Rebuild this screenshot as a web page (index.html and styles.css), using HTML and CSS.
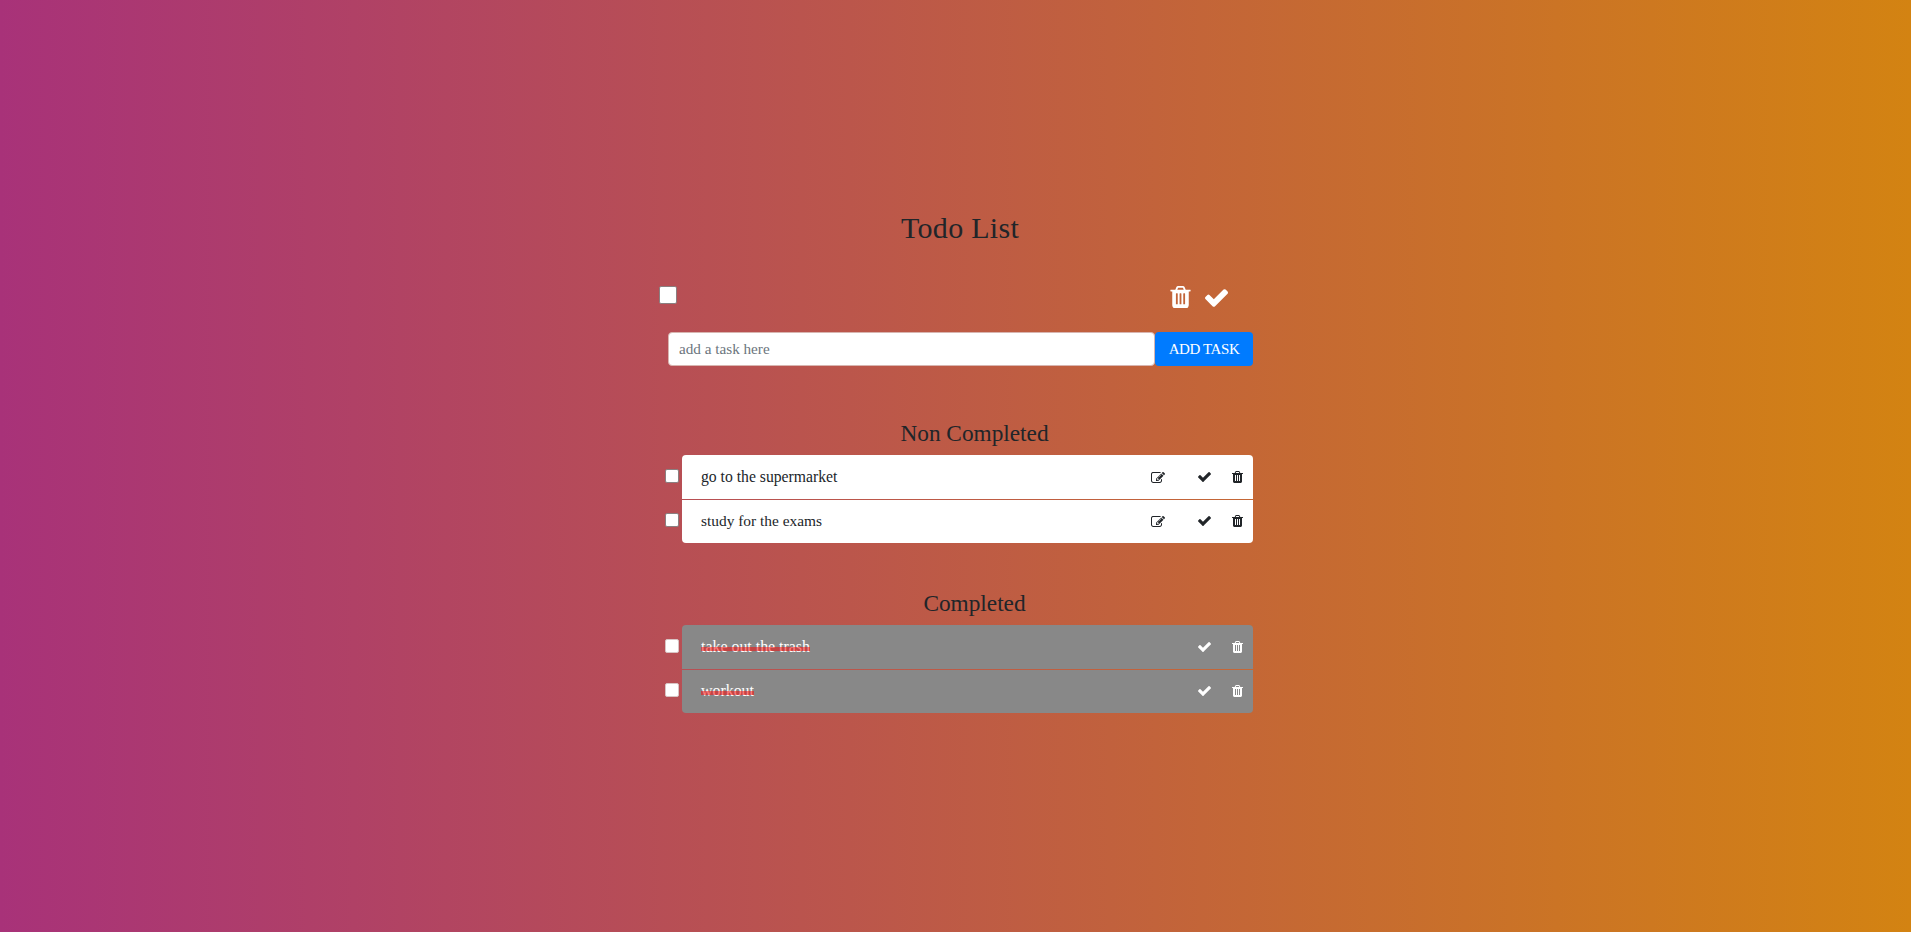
FILE: index.html
```html
<!DOCTYPE html>
<html lang="en">
<head>
<meta charset="utf-8">
<title>Todo List</title>
<link rel="stylesheet" href="styles.css">
</head>
<body>
<svg class="sprite" aria-hidden="true">
  <symbol id="check" viewBox="121 334 1550 1188"><path d="M1671 566q0 40-28 68l-724 724-136 136q-28 28-68 28t-68-28l-136-136-362-362q-28-28-28-68t28-68l136-136q28-28 68-28t68 28l294 295 656-657q28-28 68-28t68 28l136 136q28 28 28 68z"/></symbol>
  <symbol id="trash" viewBox="192 128 1408 1536"><path d="M704 1376v-704q0-14-9-23t-23-9h-64q-14 0-23 9t-9 23v704q0 14 9 23t23 9h64q14 0 23-9t9-23zm256 0v-704q0-14-9-23t-23-9h-64q-14 0-23 9t-9 23v704q0 14 9 23t23 9h64q14 0 23-9t9-23zm256 0v-704q0-14-9-23t-23-9h-64q-14 0-23 9t-9 23v704q0 14 9 23t23 9h64q14 0 23-9t9-23zm-544-992h448l-48-117q-7-9-17-11h-317q-10 2-17 11zm928 32v64q0 14-9 23t-23 9h-96v948q0 83-47 143.5t-113 60.5h-832q-66 0-113-58.5t-47-141.5v-952h-96q-14 0-23-9t-9-23v-64q0-14 9-23t23-9h309l70-167q15-37 54-63t79-26h320q40 0 79 26t54 63l70 167h309q14 0 23 9t9 23z"/></symbol>
  <symbol id="edit" viewBox="0 160 1792 1376"><path d="M888 1184l116-116-152-152-116 116v56h96v96h56zm440-720q-16-16-33 1l-350 350q-17 17-1 33t33-1l350-350q17-17 1-33zm80 594v190q0 119-84.5 203.5t-203.5 84.5h-832q-119 0-203.5-84.5t-84.5-203.5v-832q0-119 84.5-203.5t203.5-84.5h832q63 0 117 25 15 7 18 23 3 17-9 29l-49 49q-14 14-32 8-23-6-45-6h-832q-66 0-113 47t-47 113v832q0 66 47 113t113 47h832q66 0 113-47t47-113v-126q0-13 9-22l64-64q15-15 35-7t20 29zm-96-738l288 288-672 672h-288v-288zm444 132l-92 92-288-288 92-92q28-28 68-28t68 28l152 152q28 28 28 68t-28 68z"/></symbol>
</svg>
<main class="todo">
  <h1 class="title">Todo List</h1>
  <div class="toolbar">
    <input class="box box-all" type="checkbox" aria-label="Select all">
    <div class="bulk">
      <svg class="bulk-trash"><use href="#trash"/></svg>
      <svg class="bulk-check"><use href="#check"/></svg>
    </div>
  </div>
  <form class="add">
    <input class="field" type="text" placeholder="add a task here">
    <button class="add-button" type="button">ADD TASK</button>
  </form>
  <section class="group">
    <h2 class="heading">Non Completed</h2>
    <ul class="list">
      <li class="row"><input class="box" type="checkbox"><div class="task"><span class="name">go to the supermarket</span><svg class="edit"><use href="#edit"/></svg><svg class="check"><use href="#check"/></svg><svg class="trash"><use href="#trash"/></svg></div></li>
      <li class="row"><input class="box" type="checkbox"><div class="task"><span class="name name-tight">study for the exams</span><svg class="edit"><use href="#edit"/></svg><svg class="check"><use href="#check"/></svg><svg class="trash"><use href="#trash"/></svg></div></li>
    </ul>
  </section>
  <section class="group done">
    <h2 class="heading">Completed</h2>
    <ul class="list">
      <li class="row"><input class="box" type="checkbox"><div class="task"><span class="name">take out the trash</span><svg class="check"><use href="#check"/></svg><svg class="trash"><use href="#trash"/></svg></div></li>
      <li class="row"><input class="box" type="checkbox"><div class="task"><span class="name">workout</span><svg class="check"><use href="#check"/></svg><svg class="trash"><use href="#trash"/></svg></div></li>
    </ul>
  </section>
</main>
</body>
</html>
```
FILE: styles.css
```css
* {
  box-sizing: border-box;
}

body {
  margin: 0;
  min-height: 100vh;
  background: linear-gradient(to right, #a83279, #d38312);
  color: #212529;
  font-family: "Liberation Serif", serif;
  font-size: 15.7px;
}

svg {
  display: block;
  flex: none;
  fill: currentColor;
}

.sprite {
  position: absolute;
  width: 0;
  height: 0;
}

.todo {
  width: 594px;
  margin-left: 659px;
  padding-top: 209px;
}

.title {
  margin: 0 0 0 242px;
  font-size: 30px;
  font-weight: 400;
  line-height: 38px;
  letter-spacing: 0.3px;
}

.box {
  appearance: none;
  flex: none;
  width: 14px;
  height: 14px;
  margin: 0;
  border: 1px solid #8a7f80;
  border-radius: 2px;
  background: #fff;
}

.box-all {
  width: 18px;
  height: 18px;
}

.toolbar {
  display: flex;
  align-items: flex-start;
  justify-content: space-between;
  height: 47px;
  margin-top: 38px;
}

.toolbar .box-all {
  margin-top: 1px;
}

.bulk {
  display: flex;
  gap: 14px;
  margin: 1px 25px 0 0;
  color: #fff;
}

.bulk-trash {
  width: 21px;
  height: 22px;
}

.bulk-check {
  width: 23px;
  height: 18px;
  margin-top: 3px;
}

.add {
  display: flex;
  height: 34px;
  margin-left: 9px;
}

.field {
  width: 487px;
  padding: 0 10px;
  border: 1px solid #d8b5b0;
  border-radius: 4px;
  background: #fff;
  font-family: inherit;
  font-size: 15.2px;
}

.field::placeholder {
  color: #6c757d;
}

.add-button {
  width: 98px;
  padding: 0;
  border: 0;
  border-radius: 4px;
  background: #007bff;
  color: #fff;
  font-family: inherit;
  font-size: 15px;
  letter-spacing: -0.4px;
}

.group {
  margin: 53px 0 0 6px;
}

.heading {
  margin: 0 0 0 31px;
  font-size: 23.3px;
  font-weight: 400;
  line-height: 29px;
  text-align: center;
}

.list {
  display: grid;
  gap: 1px;
  margin: 7px 0 0;
  padding: 0;
  list-style: none;
}

.row {
  display: flex;
  gap: 3px;
  height: 44px;
}

.row + .row {
  height: 43px;
}

.row .box {
  margin-top: 14px;
}

.row + .row .box {
  margin-top: 13px;
}

.task {
  display: flex;
  flex: 1;
  align-items: center;
  padding: 0 10px 0 19px;
  background: #fff;
}

.row:first-child .task {
  border-radius: 4px 4px 0 0;
}

.row:last-child .task {
  padding-bottom: 1px;
  border-radius: 0 0 4px 4px;
}

.name {
  position: relative;
  margin-right: auto;
  line-height: 20px;
}

.name-tight {
  font-size: 15.4px;
}

.edit {
  width: 14px;
  height: 11px;
  margin-right: 33px;
}

.check {
  width: 13px;
  height: 10px;
  margin-right: 21px;
}

.trash {
  width: 11px;
  height: 12px;
}

.done {
  margin-top: 46px;
}

.done .box {
  border-color: #d8c4c4;
}

.done .task {
  background: #888;
  color: #fff;
}

.done .name {
  font-size: 15.9px;
}

/* translucent strike that tints the letters it crosses */
.done .name::after {
  content: "";
  position: absolute;
  left: 0;
  right: 0;
  top: 10px;
  height: 4px;
  background: rgba(255, 0, 0, 0.5);
}
```
